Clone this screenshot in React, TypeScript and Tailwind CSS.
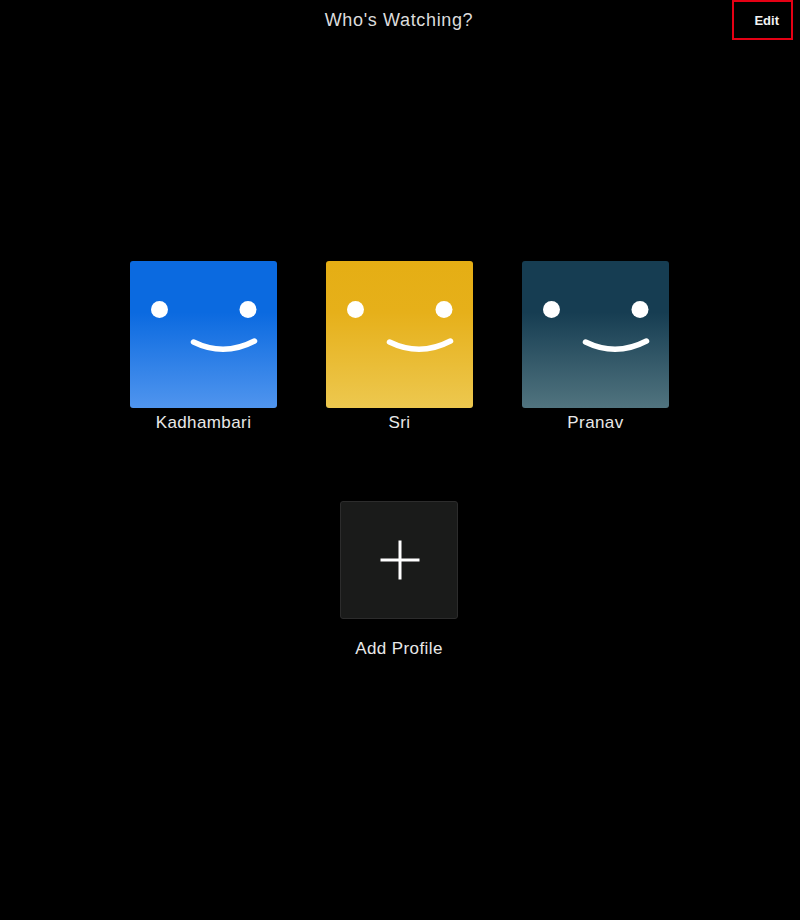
const profiles = [
  { name: 'Kadhambari', bg: 'bg-[linear-gradient(180deg,#0b6ae0_0%,#0b6ae0_35%,#5095ee_100%)]' },
  { name: 'Sri', bg: 'bg-[linear-gradient(180deg,#e5ae14_0%,#e6b01a_35%,#edc84f_100%)]' },
  { name: 'Pranav', bg: 'bg-[linear-gradient(180deg,#163d52_0%,#163d52_35%,#51747f_100%)]' },
]

function Face() {
  return (
    <svg viewBox="0 0 147 147" className="block w-full h-full">
      <circle cx="29.5" cy="48.5" r="8.5" fill="#fff" />
      <circle cx="118" cy="48.5" r="8.5" fill="#fff" />
      <path d="M63.5 81 Q94 96 124.5 80" fill="none" stroke="#fff" strokeWidth="5.5" strokeLinecap="round" />
    </svg>
  )
}

export default function App() {
  return (
    <div className="w-[800px] h-[920px] bg-black text-white font-['Liberation_Sans',sans-serif] overflow-hidden">
      <header className="relative h-10 flex items-center justify-center pr-0.5">
        <h1 className="text-[18px] font-normal text-[#dcdcdc] tracking-[0.65px]">Who's Watching?</h1>
        <div className="absolute right-[7px] top-0 w-[61px] h-10 border-2 border-[#e50014] flex items-center justify-end pr-[12px] pt-0.5">
          <span className="text-[13px] font-bold text-[#f2f2f2]">Edit</span>
        </div>
      </header>

      <div className="flex justify-center gap-[49px] pt-[221px] pr-px">
        {profiles.map(p => (
          <div key={p.name} className="w-[147px] flex flex-col items-center">
            <div className={`w-[147px] h-[147px] rounded-[3px] ${p.bg}`}>
              <Face />
            </div>
            <span className="mt-[5px] text-[17px] leading-5 text-[#e8e8e8] tracking-[0.4px]">{p.name}</span>
          </div>
        ))}
      </div>

      <div className="flex flex-col items-center mt-[68px] pr-0.5">
        <div className="w-[118px] h-[118px] rounded-[3px] bg-[#1a1b1a] border border-[#2c2c2c] flex items-center justify-center">
          <svg viewBox="0 0 40 40" className="w-10 h-10 ml-px -mt-px">
            <path d="M20 0.5V39.5M0.5 20H39.5" stroke="#fff" strokeWidth="3" fill="none" />
          </svg>
        </div>
        <span className="mt-5 text-[17px] leading-5 text-[#e8e8e8] tracking-[0.4px]">Add Profile</span>
      </div>
    </div>
  )
}
